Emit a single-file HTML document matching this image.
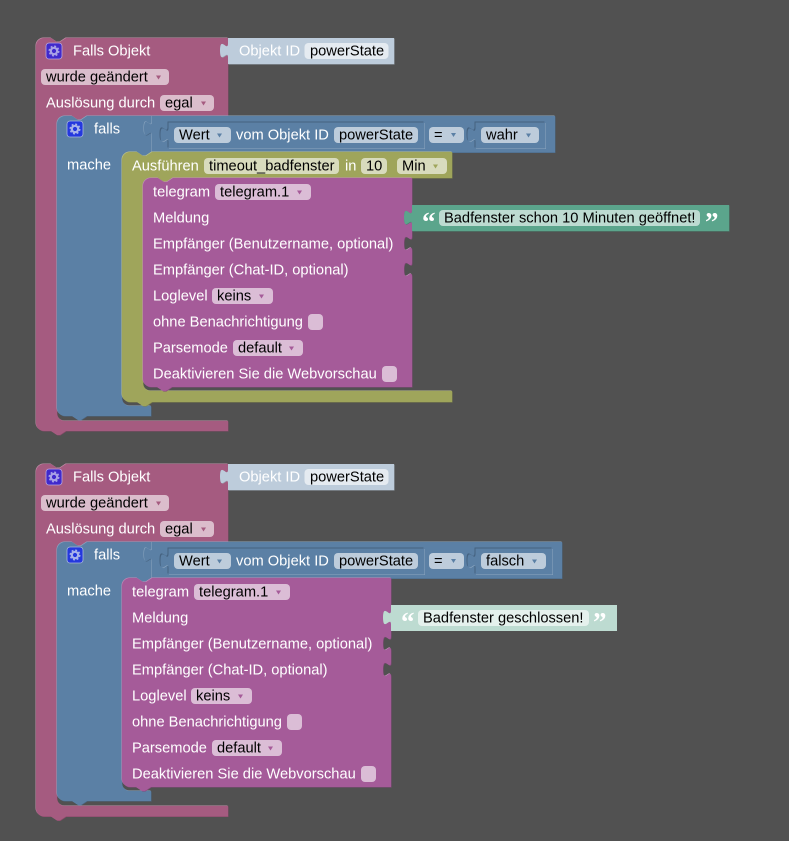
<!DOCTYPE html>
<html><head><meta charset="utf-8"><style>
html,body{margin:0;padding:0;background:#515151;width:789px;height:841px;overflow:hidden}
svg{display:block}
text{font-family:"Liberation Sans",Arial,sans-serif;font-size:14.67px;white-space:pre}
.w{fill:#fff}.b{fill:#000}
.q{font-family:"Liberation Serif",serif;font-weight:bold;font-size:27px;fill:#fff}
.f{fill:#fff;fill-opacity:.6}
</style></head><body>
<svg width="789" height="841" viewBox="0 0 789 841" xmlns="http://www.w3.org/2000/svg">
<defs>
<path id="pink" d="M36,46a8,8 0 0 1 8,-8h7l6,4h3l6,-4H228v5c0,10 -8,-8 -8,7.5s8,-2.5 8,7.5V116H87l-6,4h-3l-6,-4H65a8,8 0 0 0 -8,8V413a8,8 0 0 0 8,8H228V431H66l-6,4h-3l-6,-4H44a8,8 0 0 1 -8,-8Z"/>
<path id="pink2" d="M36,46a8,8 0 0 1 8,-8h7l6,4h3l6,-4H228v5c0,10 -8,-8 -8,7.5s8,-2.5 8,7.5V116H87l-6,4h-3l-6,-4H65a8,8 0 0 0 -8,8V372a8,8 0 0 0 8,8H228V390.500H66l-6,4h-3l-6,-4H44a8,8 0 0 1 -8,-8Z"/>
<path id="obj" d="M228,38H394V64H228V58c0,-10 -8,8 -8,-7.5s8,2.5 8,-7.5Z"/>
<path id="blue1" d="M57,124a8,8 0 0 1 8,-8h7l6,4h3l6,-4H152v5c0,10 -8,-8 -8,7.5s8,-2.5 8,7.5V152H152l-6,4h-3l-6,-4H130a8,8 0 0 0 -8,8V398a8,8 0 0 0 8,8H151V416H87l-6,4h-3l-6,-4H65a8,8 0 0 1 -8,-8Z"/>
<path id="blue2" d="M57,124a8,8 0 0 1 8,-8h7l6,4h3l6,-4H152v5c0,10 -8,-8 -8,7.5s8,-2.5 8,7.5V152H152l-6,4h-3l-6,-4H130a8,8 0 0 0 -8,8V357a8,8 0 0 0 8,8H151V375H87l-6,4h-3l-6,-4H65a8,8 0 0 1 -8,-8Z"/>
<path id="cmpA" d="M152,116H555V152.500H152V136c0,-10 -8,8 -8,-7.500s8,2.500 8,-7.500Z"/>
<path id="cmpB" d="M152,116H562V152.500H152V136c0,-10 -8,8 -8,-7.500s8,2.500 8,-7.500Z"/>
<path id="wert" d="M168,122H424V148H168V142c0,-10 -8,8 -8,-7.500s8,2.500 8,-7.500Z"/>
<path id="wahr" d="M475,122H545V148H475V142c0,-10 -8,8 -8,-7.500s8,2.500 8,-7.500Z"/>
<path id="fals" d="M475,122H552V148H475V142c0,-10 -8,8 -8,-7.500s8,2.500 8,-7.500Z"/>
<path id="olive" d="M122,160a8,8 0 0 1 8,-8h7l6,4h3l6,-4H452V178H172l-6,4h-3l-6,-4H151a8,8 0 0 0 -8,8V383a8,8 0 0 0 8,8H452V402H152l-6,4h-3l-6,-4H130a8,8 0 0 1 -8,-8Z"/>
<path id="purple" d="M143,186a8,8 0 0 1 8,-8h7l6,4h3l6,-4H412V210c0,10 -8,-8 -8,7.500s8,-2.500 8,7.500V236c0,10 -8,-8 -8,7.500s8,-2.500 8,7.500V262c0,10 -8,-8 -8,7.500s8,-2.500 8,7.500V387H172l-6,4h-3l-6,-4H151a8,8 0 0 1 -8,-8Z"/>
<path id="green" d="M412,205H729V231H412V225c0,-10 -8,8 -8,-7.500s8,2.500 8,-7.500Z"/>
<path id="green2" d="M412,205H638V231H412V225c0,-10 -8,8 -8,-7.500s8,2.500 8,-7.500Z"/>
<g id="gear"><circle cx="8" cy="8" r="3.200" fill="none" stroke="currentColor" stroke-width="2.200"/><circle cx="8" cy="8" r="4.800" fill="none" stroke="currentColor" stroke-width="1.400" stroke-dasharray="2 1.770"/></g>
</defs>

<!-- ============ FIRST STACK ============ -->
<g>
<use href="#pink" fill="#844966" transform="translate(.5,.5)"/><use href="#pink" fill="#c08fa7" transform="translate(-.5,-.5)"/><use href="#pink" fill="#a55b80"/>
<use href="#obj" fill="#97a3af" transform="translate(.5,.5)"/><use href="#obj" fill="#bdccdb"/>
<rect x="46" y="43" width="16" height="16" rx="3" fill="#4029cc" stroke="#b9a6dc" stroke-width=".8"/>
<use href="#gear" x="46" y="43" color="#a9a2e6"/>
<text class="w" x="73" y="55.500">Falls Objekt</text>
<text class="w" x="239" y="55.500">Objekt ID</text>
<rect class="f" x="304.500" y="43" width="84" height="16" rx="4"/><text class="b" x="310" y="55.500">powerState</text>
<rect class="f" x="41" y="69" width="128" height="16" rx="4"/><text class="b" x="46" y="81.500">wurde geändert</text><polygon points="156,75.500 161,75.500 158.500,79.500" fill="#a55b80"/>
<text class="w" x="46" y="107.500">Auslösung durch</text>
<rect class="f" x="160" y="95" width="54" height="16" rx="4"/><text class="b" x="165" y="107.500">egal</text><polygon points="201,101.500 206,101.500 203.500,105.500" fill="#a55b80"/>

<use href="#blue1" fill="#496684" transform="translate(.5,.5)"/><use href="#blue1" fill="#8ca6c0" transform="translate(-.5,-.5)"/><use href="#blue1" fill="#5b80a5"/>
<rect x="67" y="121" width="16" height="16" rx="3" fill="#2438de" stroke="#a6b6dc" stroke-width=".8"/>
<use href="#gear" x="67" y="121" color="#a9b4ea"/>
<text class="w" x="94" y="133.500">falls</text>
<text class="w" x="67" y="169.500">mache</text>

<use href="#cmpA" fill="#496684" transform="translate(.5,.5)"/><use href="#cmpA" fill="#8ca6c0" transform="translate(-.5,-.5)"/><use href="#cmpA" fill="#5b80a5"/>
<use href="#wert" fill="#456280" transform="translate(-.5,-.5)"/><use href="#wert" fill="#8ca6c0" transform="translate(1,1)"/><use href="#wert" fill="#5b80a5" transform="translate(.5,.5)"/>
<use href="#wahr" fill="#456280" transform="translate(-.5,-.5)"/><use href="#wahr" fill="#8ca6c0" transform="translate(1,1)"/><use href="#wahr" fill="#5b80a5" transform="translate(.5,.5)"/>
<rect class="f" x="174" y="127" width="57" height="16" rx="4"/><text class="b" x="179" y="139.500">Wert</text><polygon points="217,133.500 222,133.500 219.500,137.500" fill="#5b80a5"/>
<text class="w" x="236" y="139.500">vom Objekt ID</text>
<rect class="f" x="334" y="127" width="84" height="16" rx="4"/><text class="b" x="339" y="139.500">powerState</text>
<rect class="f" x="429" y="127" width="35" height="16" rx="4"/><text class="b" x="434" y="139.500">=</text><polygon points="451,133 456,133 453.500,137" fill="#5b80a5"/>
<rect class="f" x="481" y="127" width="58" height="16" rx="4"/><text class="b" x="486" y="139.500">wahr</text><polygon points="526,133.500 531,133.500 528.500,137.500" fill="#5b80a5"/>

<use href="#olive" fill="#7f8449" transform="translate(.5,.5)"/><use href="#olive" fill="#bbc08c" transform="translate(-.5,-.5)"/><use href="#olive" fill="#9fa55b"/>
<text class="w" x="132" y="170.500">Ausführen</text>
<rect class="f" x="204" y="158" width="135" height="16" rx="4"/><text class="b" x="209" y="170.500">timeout_badfenster</text>
<text class="w" x="345" y="170.500">in</text>
<rect class="f" x="361" y="158" width="26" height="16" rx="4"/><text class="b" x="366" y="170.500">10</text>
<rect class="f" x="397" y="158" width="50" height="16" rx="4"/><text class="b" x="402" y="170.500">Min</text><polygon points="433,164.500 438,164.500 435.500,168.500" fill="#9fa55b"/>

<g>
<use href="#purple" fill="#84497a" transform="translate(.5,.5)"/><use href="#purple" fill="#c08cb8" transform="translate(-.5,-.5)"/><use href="#purple" fill="#a55b99"/>
<text class="w" x="153" y="196.500">telegram</text>
<rect class="f" x="215" y="184" width="96" height="16" rx="4"/><text class="b" x="220" y="196.500">telegram.1</text><polygon points="297,190.500 302,190.500 299.500,194.500" fill="#a55b99"/>
<text class="w" x="153" y="222.500">Meldung</text>
<text class="w" x="153" y="248.500">Empfänger (Benutzername, optional)</text>
<text class="w" x="153" y="274.500">Empfänger (Chat-ID, optional)</text>
<text class="w" x="153" y="300.500">Loglevel</text>
<rect class="f" x="212" y="288" width="61" height="16" rx="4"/><text class="b" x="217" y="300.500">keins</text><polygon points="259,294.500 264,294.500 261.500,298.500" fill="#a55b99"/>
<text class="w" x="153" y="326.500">ohne Benachrichtigung</text>
<rect class="f" x="308" y="314" width="15" height="16" rx="4"/>
<text class="w" x="153" y="352.500">Parsemode</text>
<rect class="f" x="233" y="340" width="70" height="16" rx="4"/><text class="b" x="238" y="352.500">default</text><polygon points="289,346.500 294,346.500 291.500,350.500" fill="#a55b99"/>
<text class="w" x="153" y="378.500">Deaktivieren Sie die Webvorschau</text>
<rect class="f" x="382" y="366" width="15" height="16" rx="4"/>
</g>

<use href="#green" fill="#498470" transform="translate(.5,.5)"/><use href="#green" fill="#5ba58c"/>
<text class="q" x="422" y="231">“</text>
<rect class="f" x="439" y="210" width="261" height="16" rx="4"/><text class="b" x="444" y="222.500">Badfenster schon 10 Minuten geöffnet!</text>
<text class="q" x="705" y="231">”</text>
</g>

<!-- ============ SECOND STACK ============ -->
<g transform="translate(0,426)">
<use href="#pink2" fill="#844966" transform="translate(.5,.5)"/><use href="#pink2" fill="#c08fa7" transform="translate(-.5,-.5)"/><use href="#pink2" fill="#a55b80"/>
<use href="#obj" fill="#97a3af" transform="translate(.5,.5)"/><use href="#obj" fill="#bdccdb"/>
<rect x="46" y="43" width="16" height="16" rx="3" fill="#4029cc" stroke="#b9a6dc" stroke-width=".8"/>
<use href="#gear" x="46" y="43" color="#a9a2e6"/>
<text class="w" x="73" y="55.500">Falls Objekt</text>
<text class="w" x="239" y="55.500">Objekt ID</text>
<rect class="f" x="304.500" y="43" width="84" height="16" rx="4"/><text class="b" x="310" y="55.500">powerState</text>
<rect class="f" x="41" y="69" width="128" height="16" rx="4"/><text class="b" x="46" y="81.500">wurde geändert</text><polygon points="156,75.500 161,75.500 158.500,79.500" fill="#a55b80"/>
<text class="w" x="46" y="107.500">Auslösung durch</text>
<rect class="f" x="160" y="95" width="54" height="16" rx="4"/><text class="b" x="165" y="107.500">egal</text><polygon points="201,101.500 206,101.500 203.500,105.500" fill="#a55b80"/>

<use href="#blue2" fill="#496684" transform="translate(.5,.5)"/><use href="#blue2" fill="#8ca6c0" transform="translate(-.5,-.5)"/><use href="#blue2" fill="#5b80a5"/>
<rect x="67" y="121" width="16" height="16" rx="3" fill="#2438de" stroke="#a6b6dc" stroke-width=".8"/>
<use href="#gear" x="67" y="121" color="#a9b4ea"/>
<text class="w" x="94" y="133.500">falls</text>
<text class="w" x="67" y="169.500">mache</text>

<use href="#cmpB" fill="#496684" transform="translate(.5,.5)"/><use href="#cmpB" fill="#8ca6c0" transform="translate(-.5,-.5)"/><use href="#cmpB" fill="#5b80a5"/>
<use href="#wert" fill="#456280" transform="translate(-.5,-.5)"/><use href="#wert" fill="#8ca6c0" transform="translate(1,1)"/><use href="#wert" fill="#5b80a5" transform="translate(.5,.5)"/>
<use href="#fals" fill="#456280" transform="translate(-.5,-.5)"/><use href="#fals" fill="#8ca6c0" transform="translate(1,1)"/><use href="#fals" fill="#5b80a5" transform="translate(.5,.5)"/>
<rect class="f" x="174" y="127" width="57" height="16" rx="4"/><text class="b" x="179" y="139.500">Wert</text><polygon points="217,133.500 222,133.500 219.500,137.500" fill="#5b80a5"/>
<text class="w" x="236" y="139.500">vom Objekt ID</text>
<rect class="f" x="334" y="127" width="84" height="16" rx="4"/><text class="b" x="339" y="139.500">powerState</text>
<rect class="f" x="429" y="127" width="35" height="16" rx="4"/><text class="b" x="434" y="139.500">=</text><polygon points="451,133 456,133 453.500,137" fill="#5b80a5"/>
<rect class="f" x="481" y="127" width="65" height="16" rx="4"/><text class="b" x="486" y="139.500">falsch</text><polygon points="532,133.500 537,133.500 534.500,137.500" fill="#5b80a5"/>

<g transform="translate(-21,-26)">
<use href="#purple" fill="#84497a" transform="translate(.5,.5)"/><use href="#purple" fill="#c08cb8" transform="translate(-.5,-.5)"/><use href="#purple" fill="#a55b99"/>
<text class="w" x="153" y="196.500">telegram</text>
<rect class="f" x="215" y="184" width="96" height="16" rx="4"/><text class="b" x="220" y="196.500">telegram.1</text><polygon points="297,190.500 302,190.500 299.500,194.500" fill="#a55b99"/>
<text class="w" x="153" y="222.500">Meldung</text>
<text class="w" x="153" y="248.500">Empfänger (Benutzername, optional)</text>
<text class="w" x="153" y="274.500">Empfänger (Chat-ID, optional)</text>
<text class="w" x="153" y="300.500">Loglevel</text>
<rect class="f" x="212" y="288" width="61" height="16" rx="4"/><text class="b" x="217" y="300.500">keins</text><polygon points="259,294.500 264,294.500 261.500,298.500" fill="#a55b99"/>
<text class="w" x="153" y="326.500">ohne Benachrichtigung</text>
<rect class="f" x="308" y="314" width="15" height="16" rx="4"/>
<text class="w" x="153" y="352.500">Parsemode</text>
<rect class="f" x="233" y="340" width="70" height="16" rx="4"/><text class="b" x="238" y="352.500">default</text><polygon points="289,346.500 294,346.500 291.500,350.500" fill="#a55b99"/>
<text class="w" x="153" y="378.500">Deaktivieren Sie die Webvorschau</text>
<rect class="f" x="382" y="366" width="15" height="16" rx="4"/>

<use href="#green2" fill="#bddbd1"/>
<text class="q" x="422" y="231">“</text>
<rect class="f" x="439" y="210" width="171" height="16" rx="4"/><text class="b" x="444" y="222.500">Badfenster geschlossen!</text>
<text class="q" x="614" y="231">”</text>
</g>
</g>
</svg>
</body></html>
